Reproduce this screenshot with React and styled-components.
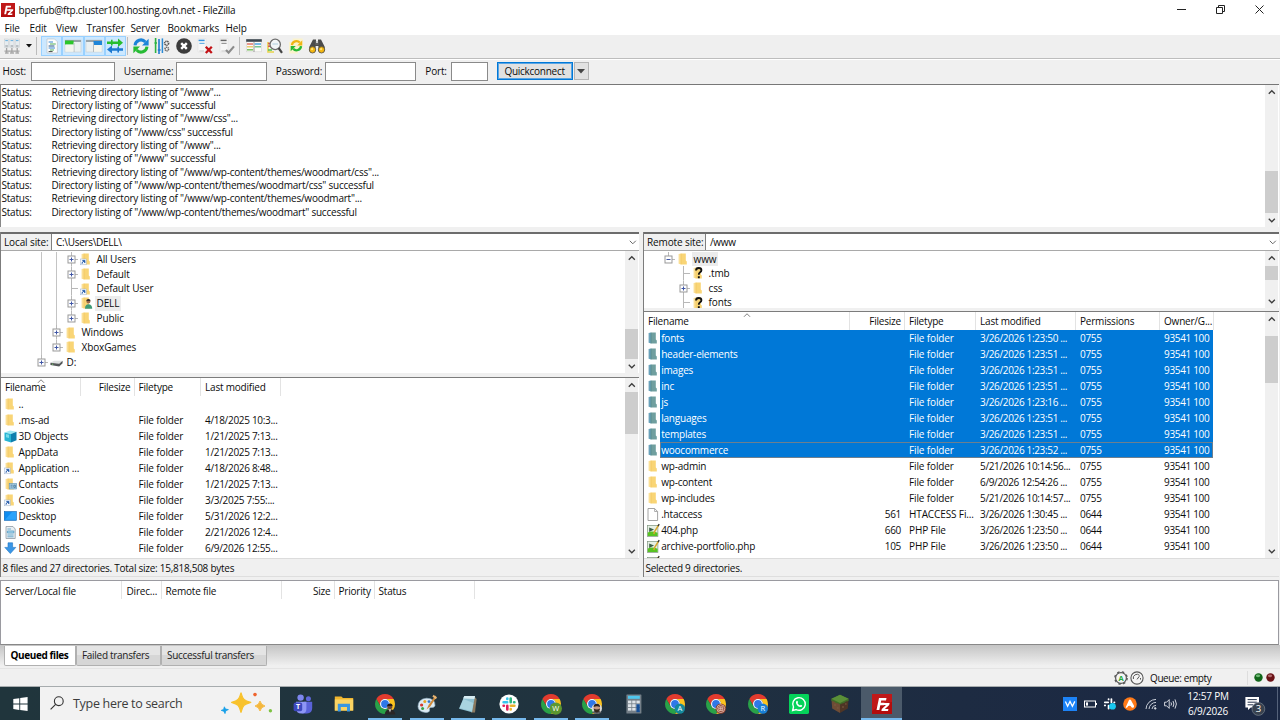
import React from 'react';
import styled, { createGlobalStyle, css } from 'styled-components';

const GlobalStyle = createGlobalStyle`
* {
  box-sizing: border-box;
}
body {
  margin: 0;
  overflow: hidden;
  background: #f0f0f0;
}
`;

const Window = styled.div`
display: flex;
flex-direction: column;
width: 1280px;
height: 720px;
background: #f0f0f0;
color: #0c0c0c;
font-family: "Open Sans", "Noto Sans", sans-serif;
font-size: 10px;
letter-spacing: -0.12px;
white-space: pre;
overflow: hidden;
`;

const Svg = styled.svg`
display: block;
flex: none;
overflow: visible;
`;

/* title and menu */

const TitleBar = styled.header`
display: flex;
align-items: center;
height: 20px;
padding: 0 1px 1px 1px;
background: #fff;
`;

const Title = styled.span`
flex: 1;
padding-left: 3.5px;
letter-spacing: -0.24px;
`;

const WindowButton = styled.span`
display: flex;
justify-content: center;
width: 39px;
`;

const MenuBar = styled.nav`
display: flex;
align-items: center;
height: 15px;
padding-left: 4.5px;
background: #fff;
`;

const MenuItem = styled.span`
width: ${props => props.$w}px;
`;

/* toolbar */

const Toolbar = styled.div`
display: flex;
align-items: center;
height: 24px;
padding: 0 0 1px 1px;
background: #efefef;
border-bottom: 1px solid #bdbdbd;
`;

const ToolButton = styled.span`
display: flex;
align-items: center;
justify-content: center;
width: ${props => props.$w || 21.2}px;
height: 20px;
${props => props.$on && css`
  background: #cce8ff;
  border: 1px solid #99d1ff;
`}
`;

const Divider = styled.span`
width: 1px;
height: 18px;
margin: 0 ${props => props.$right}px 0 ${props => props.$left}px;
background: #bcbcbc;
`;

const ConnectBar = styled.div`
display: flex;
align-items: center;
height: 25px;
padding: 0 0 2px 2.5px;
border-top: 1px solid #fff;
background: #f0f0f0;
`;

const FieldLabel = styled.label`
width: ${props => props.$w}px;
letter-spacing: -0.15px;
`;

const Field = styled.input`
width: ${props => props.$w}px;
height: 19px;
margin-right: 8.8px;
padding: 0 3px;
border: 1px solid #8a8a8a;
background: #fff;
`;

const ConnectButton = styled.button`
width: 76px;
height: 18px;
margin: 0 1px 0 0;
padding: 0;
border: 1px solid #0078d7;
outline: 1px solid #5aa5e4;
outline-offset: -2px;
background: #e1e1e1;
color: inherit;
font: inherit;
letter-spacing: -0.27px;
`;

const DropButton = styled.button`
display: flex;
align-items: center;
justify-content: center;
width: 15px;
height: 18px;
padding: 0;
border: 1px solid #b5b5b5;
background: #e1e1e1;
`;

/* panes */

const LogPane = styled.section`
display: flex;
height: 143px;
margin-right: 1px;
border-top: 1px solid #777;
border-left: 1px solid #888;
background: #fff;
`;

const LogLines = styled.div`
flex: 1;
padding-top: 0.7px;
overflow: hidden;
letter-spacing: -0.225px;
`;

const LogLine = styled.div`
display: flex;
height: 13.33px;
line-height: 13.33px;
padding-left: 0.5px;
`;

const LogKind = styled.span`
width: 50px;
`;

const Split = styled.main`
display: flex;
gap: 4px;
height: 345px;
margin-top: 5px;
padding-right: 1px;
`;

const Side = styled.section`
display: flex;
flex-direction: column;
width: ${props => props.$w}px;
border-left: 1px solid #7c7c7c;
`;

const SiteRow = styled.div`
display: flex;
flex: none;
height: 19px;
border-top: 2px solid #6c6c6c;
border-bottom: 1px solid #a9a9a9;
background: #fff;
line-height: 16px;
`;

const SiteLabel = styled.span`
width: ${props => props.$w}px;
padding-left: 3px;
border-right: 1px solid #808080;
background: #f0f0f0;
`;

const SitePath = styled.span`
display: flex;
flex: 1;
align-items: center;
justify-content: space-between;
padding: 0 2px 0 4px;
letter-spacing: -0.3px;
`;

const TreePane = styled.div`
display: flex;
flex: none;
height: ${props => props.$h}px;
background: #fff;
`;

const TreeRows = styled.div`
flex: 1;
padding: ${props => props.$top}px 0 0 ${props => props.$indent}px;
overflow: hidden;
`;

const TreeRow = styled.div`
display: flex;
height: 14.67px;
align-items: center;
`;

const Guide = styled.span`
width: 15px;
height: 14.67px;
background: linear-gradient(#c4c4c4, #c4c4c4) 7px 0 / 1px ${props => props.$line ? '100%' : '0'} no-repeat;
`;

const TreeIcon = styled.span`
display: flex;
justify-content: center;
width: 15px;
`;

const TreeLabel = styled.span`
height: 14.67px;
margin-left: 1px;
padding: 0 1.5px;
line-height: 14px;
background: ${props => props.$current ? '#ececec' : 'transparent'};
`;

const ListPane = styled.div`
display: flex;
flex: none;
height: ${props => props.$h}px;
margin-top: ${props => props.$gap}px;
border-top: 1px solid #7c7c7c;
background: #fff;
`;

const ListBody = styled.div`
flex: 1;
overflow: hidden;
`;

const ListHeader = styled.div`
display: flex;
height: 18px;
line-height: ${props => props.$lh || 18}px;
`;

const HeaderCell = styled.span`
position: relative;
flex: none;
width: ${props => props.$w}px;
padding: 0 ${props => props.$pr || 3}px 0 ${props => props.$pl || 4}px;
border-right: 1px solid #e3e3e3;
text-align: ${props => props.$right ? 'right' : 'left'};
letter-spacing: -0.2px;
`;

const SortMark = styled.span`
position: absolute;
top: 0.5px;
left: 50%;
transform: translateX(-50%);
`;

const Row = styled.div`
display: flex;
height: 16px;
line-height: 16px;
`;

const IconSlot = styled.span`
display: flex;
align-items: center;
flex: none;
width: 16px;
padding-left: 2.5px;
`;

const RowFields = styled.div`
display: flex;
flex: none;
${props => props.$selected && css`
  background: #0078d7;
  color: #fff;
`}
${props => props.$focused && css`
  box-shadow: inset 0 0 0 1px #6d7f8e;
`}
`;

const Cell = styled.span`
flex: none;
width: ${props => props.$w}px;
padding: 0 4px 0 ${props => props.$pl || 4}px;
letter-spacing: ${props => props.$ls || -0.12}px;
text-align: ${props => props.$right ? 'right' : 'left'};
`;

const PaneStatus = styled.div`
flex: none;
height: 19px;
padding-left: 1.5px;
border-top: 1px solid #dcdcdc;
border-bottom: 1px solid #dedede;
line-height: 18px;
letter-spacing: -0.26px;
`;

/* scrollbar */

const Bar = styled.div`
display: flex;
flex: none;
flex-direction: column;
align-items: center;
width: 13px;
padding: 5px 0 4px;
margin-right: 1px;
background: #f0f0f0;
`;

const Thumb = styled.div`
width: 13px;
height: ${props => props.$h}px;
margin: ${props => props.$gap}px 0 auto;
background: #cdcdcd;
`;

/* queue */

const QueuePane = styled.section`
height: 65px;
margin: 3px 1px 0 0;
border: 1px solid #9a9aa0;
border-bottom-color: #888;
background: #fff;
`;

const Tabs = styled.div`
display: flex;
height: 24px;
padding: 1px 0 0 4px;
background: linear-gradient(#c4c4c4, #f0f0f0 90%);
border-bottom: 1px solid #e4e4e4;
`;

const Tab = styled.span`
width: ${props => props.$w}px;
height: 20px;
padding-left: ${props => props.$active ? 5.5 : 5}px;
line-height: 19px;
border: 1px solid #b0b0b0;
border-top: 0;
border-radius: 0 0 2px 2px;
background: ${props => props.$active ? '#fff' : 'linear-gradient(#e4e4e4 50%, #d6d6d6 50%)'};
font-weight: ${props => props.$active ? 700 : 400};
letter-spacing: ${props => props.$active ? -0.4 : -0.3}px;
color: ${props => props.$active ? '#000' : '#222'};
`;

const StatusBar = styled.footer`
display: flex;
align-items: center;
height: 17px;
padding-left: 1114px;
`;

const QueueText = styled.span`
width: 98px;
margin-left: 6px;
border-right: 1px solid #ddd;
letter-spacing: -0.4px;
`;

const Leds = styled.span`
display: flex;
gap: 3px;
margin-left: 6px;
`;

/* taskbar */

const Taskbar = styled.div`
display: flex;
height: 34px;
border-top: 1px solid #a7acae;
background: linear-gradient(90deg, #20353c, #20333f 45%, #1d2b42 75%, #1b2844);
color: #fff;
`;

const StartButton = styled.div`
display: flex;
align-items: center;
justify-content: center;
width: 40px;
`;

const SearchBox = styled.div`
display: flex;
align-items: center;
width: 240px;
height: 33px;
padding: 0 0 1px 10px;
background: #f2f2f2;
color: #3c3c3c;
font-size: 12.5px;
letter-spacing: -0.3px;
`;

const SearchText = styled.span`
width: 156.5px;
padding-left: 9px;
`;

const Apps = styled.div`
display: flex;
flex: 1;
padding-left: 2px;
`;

const AppButton = styled.span`
display: flex;
align-items: center;
justify-content: center;
width: 41.37px;
background: ${props => props.$active ? '#4b5a6a' : 'transparent'};
${props => props.$open && css`
  background-image: linear-gradient(#76b9ed, #76b9ed);
  background-position: center bottom;
  background-size: ${props.$active ? '100%' : '34px'} 2px;
  background-repeat: no-repeat;
`}
`;

const Tray = styled.div`
display: flex;
align-items: center;
width: 219px;
`;

const TrayIcon = styled.span`
display: flex;
justify-content: center;
width: ${props => props.$w || 20}px;
`;

const Clock = styled.div`
width: 54px;
text-align: center;
line-height: 15px;
letter-spacing: -0.2px;
`;

const Notices = styled.div`
display: flex;
justify-content: center;
width: 40px;
`;

const ShowDesktop = styled.span`
width: 1px;
height: 33px;
margin-left: 2px;
background: #55627a;
`;

/* icons */

const Chevron = ({ up, size = 7.6, color = '#3c3c3c', width = 1.7 }) =>
    <Svg width={size} height={size * 0.6} viewBox="0 0 10 6">
        <path d={up ? 'M1 5L5 1L9 5' : 'M1 1L5 5L9 1'} fill="none" stroke={color} strokeWidth={width} />
    </Svg>;

const ScrollBar = ({ gap, thumb }) =>
    <Bar>
        <Chevron up />
        <Thumb $gap={gap} $h={thumb} />
        <Chevron />
    </Bar>;

const FzLogo = ({ size }) =>
    <Svg width={size} height={size} viewBox="0 0 20 20">
        <rect width="20" height="20" fill="#b30d0d" />
        <path d="M0 0H20V8Q8 9 0 17Z" fill="#c01818" />
        <path d="M4.5 16L7 4H14.5L14 6.6H9.2L8.8 8.8H12.4L11.9 11.2H8.3L7.3 16Z" fill="#fff" />
        <path d="M11.2 9H17.6L17.2 11L12.9 14.9H16.4L16 17H9.4L9.8 14.9L14 11H10.8Z" fill="#fff" />
    </Svg>;

const Folder = ({ mark, selected }) => {
    const front = selected ? '#709f9f' : '#f9d576';
    const back = selected ? '#6aa2bb' : '#fbdf94';
    return (
        <Svg width="13" height="12" viewBox="0 0 13 12">
            <path d="M1.6 1L4.2 0.5V11.5L1.6 10.8Z" fill={back} />
            <path d="M3.8 0.5H8.8V7.6L9.8 8.4V11.5H3.8Z" fill={front} />
            <path d="M4 0.8V11.2" stroke={selected ? '#4c8387' : '#efc45c'} strokeWidth="0.6" />
            {mark === 'link' && <g>
                <rect x="0.4" y="6" width="5.8" height="5.8" fill="#f4f8fd" stroke="#9fb4cf" strokeWidth="0.5" />
                <path d="M2 10.8Q1.8 8.8 3.6 8.3M2.6 7.4H4.9V9.8Z" fill="#1f57a8" stroke="#1f57a8" strokeWidth="0.8" />
            </g>}
            {mark === 'user' && <g>
                <circle cx="8.4" cy="4.4" r="2" fill="#9c6a4b" />
                <path d="M6.3 4Q6.4 1.8 8.6 2Q10.6 2.2 10.5 4Z" fill="#3b302a" />
                <path d="M5 11.8Q5 7.2 8.4 7.2Q12.2 7.2 12.2 11.8Z" fill="#3f9a76" />
            </g>}
            {mark === 'card' && <g>
                <rect x="5.2" y="5.6" width="7.4" height="5.4" fill="#a7cbe0" stroke="#5b93b5" strokeWidth="0.6" />
                <path d="M6.6 7.2H8.6M6.6 9H8.6M9.8 7.2H11.4V9.4H9.8Z" stroke="#386e94" strokeWidth="0.7" fill="none" />
            </g>}
            {mark === 'unknown' && <path d="M4 3.5Q4.1 1 6.7 1Q9.4 1 9.4 3.2Q9.4 4.7 7.8 5.5Q6.8 6 6.8 7.8M6.8 9.3V11.3" fill="none" stroke="#111" strokeWidth="1.9" />}
        </Svg>
    );
};

const Cube = () =>
    <Svg width="13" height="13" viewBox="0 0 13 13">
        <path d="M0.5 2.4L6 0.4L12.5 1.8L7 4Z" fill="#9fe8f3" />
        <path d="M0.5 2.4L7 4V12.6L0.5 10.6Z" fill="#27b5d3" />
        <path d="M7 4L12.5 1.8V10.2L7 12.6Z" fill="#0e7fae" />
        <path d="M2 4L5 4.8V8L2 7.2Z" fill="#75dbe9" />
    </Svg>;

const Desktop = () =>
    <Svg width="13" height="12" viewBox="0 0 13 12">
        <rect x="0.3" y="1.6" width="12" height="8.7" fill="#0f8df0" stroke="#0a63b5" strokeWidth="0.6" />
        <path d="M1 9.8L8 2H12V9.8Z" fill="#2ba3fb" />
    </Svg>;

const Documents = () =>
    <Svg width="13" height="13" viewBox="0 0 13 13">
        <path d="M2 0.5H9L11.2 3V12.5H2Z" fill="#e9eef2" stroke="#8e9aa3" strokeWidth="0.8" />
        <path d="M3.4 3H7M3.4 5H9.8V7H3.4ZM3.4 9H9.6M3.4 10.8H9.6" stroke="#5ca3c8" fill="#b3dbef" strokeWidth="0.9" />
    </Svg>;

const Download = () =>
    <Svg width="13" height="12" viewBox="0 0 13 12">
        <path d="M4 0.8H8.6V5.4H11.8L6.3 11.6L0.8 5.4H4Z" fill="#3a96e6" stroke="#2075c2" strokeWidth="0.6" />
    </Svg>;

const BlankFile = () =>
    <Svg width="12" height="13" viewBox="0 0 12 13">
        <path d="M1 0.5H7.6L10.6 3.5V12.5H1Z" fill="#fff" stroke="#9a9a9a" strokeWidth="0.9" />
        <path d="M7.6 0.5V3.5H10.6" fill="none" stroke="#9a9a9a" strokeWidth="0.8" />
    </Svg>;

const PhpFile = () =>
    <Svg width="13" height="13" viewBox="0 0 13 13">
        <rect x="0.5" y="1.4" width="10.4" height="11" fill="#e6efe4" stroke="#7f957f" strokeWidth="0.7" />
        <path d="M0.8 8.4Q5 6.6 10.6 8.8V12.1H0.8Z" fill="#58c322" />
        <path d="M2.2 3.4L7 5.6L2.2 8Z" fill="#3c5f46" />
        <path d="M11.7 0.8L7.6 7.6L6.8 10" stroke="#d8a72c" strokeWidth="1.5" fill="none" />
        <path d="M12.2 0.2L11 2.2" stroke="#333" strokeWidth="1.3" />
    </Svg>;

const Drive = () =>
    <Svg width="13" height="12" viewBox="0 0 13 12">
        <path d="M0.4 6.8L4 4.8H12.6L9.2 7.8Z" fill="#dfe1e2" />
        <path d="M0.4 6.8L9.2 7.8L12.6 4.8V7.2L9.2 10.4L0.4 9Z" fill="#54585a" />
        <circle cx="2.6" cy="8.2" r="0.6" fill="#75cf63" />
    </Svg>;

const icons = {
    folder: <Folder />,
    selected: <Folder selected />,
    link: <Folder mark="link" />,
    user: <Folder mark="user" />,
    card: <Folder mark="card" />,
    unknown: <Folder mark="unknown" />,
    cube: <Cube />,
    desktop: <Desktop />,
    documents: <Documents />,
    download: <Download />,
    blank: <BlankFile />,
    php: <PhpFile />,
    drive: <Drive />,
};

// box: 'plus', 'minus' or none, end: the line stops at this node
const TreeNode = ({ box, end }) =>
    <Svg width="15" height="14.67" viewBox="0 0 15 14.67">
        <path d={`M7.5 0V${end ? 7.5 : 14.67}M7.5 7.5H14`} stroke="#b8b8b8" strokeWidth="1" />
        {box && <g>
            <rect x="4" y="4" width="7" height="7" fill="#fff" stroke="#999" />
            <path d={box === 'plus' ? 'M5.5 7.5H9.5M7.5 5.5V9.5' : 'M5.5 7.5H9.5'} stroke="#3f55a5" />
        </g>}
    </Svg>;

const Tree = ({ rows }) => rows.map(row =>
    <TreeRow key={row.name}>
        {row.guides.map((line, i) => <Guide key={i} $line={line} />)}
        <TreeNode box={row.box} end={row.end} />
        <TreeIcon>{icons[row.icon]}</TreeIcon>
        <TreeLabel $current={row.current}>{row.name}</TreeLabel>
    </TreeRow>);

/* toolbar icons */

const Tool = ({ children, size = 16 }) =>
    <Svg width={size} height={size} viewBox="0 0 16 16" fill="none">{children}</Svg>;

const SiteManagerIcon = () =>
    <Tool>
        {[0.5, 5.8, 11.1].map(x => <g key={x}>
            <rect x={x} y="1" width="4.2" height="8.6" fill="#e7ecef" stroke="#c3cace" strokeWidth="0.5" />
            <path d={`M${x + 0.8} 2.6H${x + 3.4}`} stroke="#58a8dc" strokeWidth="0.9" />
            <path d={`M${x + 0.8} 8H${x + 3.4}`} stroke="#8d959a" />
        </g>)}
        <path d="M2.6 10V14.4M7.9 10V14.4M13.2 10V14.4M0.5 13.2H15.5" stroke="#a2a2a2" strokeWidth="1.3" />
        <path d="M1 15H4.6M6 15H10M11.4 15H15" stroke="#888" />
    </Tool>;

const LogIcon = () =>
    <Tool>
        <path d="M3 1H10.6L13.4 3.8V15H3Z" fill="#fdfdfd" stroke="#b9c3ca" strokeWidth="0.7" />
        <path d="M4.6 4H9M4.6 10H11" stroke="#3b8ad2" strokeWidth="1.2" />
        <path d="M6 6H11.8M6 12H10" stroke="#55b05b" strokeWidth="1.2" />
        <path d="M4.6 8H10.4" stroke="#476f9c" strokeWidth="1.2" />
        <path d="M4.6 13.6H8.6" stroke="#444" />
    </Tool>;

const LocalIcon = () =>
    <Tool>
        <rect x="0" y="2" width="16" height="12" fill="#eaf0f1" stroke="#c5cdd0" strokeWidth="0.6" />
        <rect x="0" y="2" width="16" height="2" fill="#98a4aa" />
        <rect x="0" y="2.6" width="8.6" height="4" fill="#2bc62b" />
        <path d="M9 5V14" stroke="#b3bcc0" />
        <rect x="0.5" y="6.6" width="8" height="7" fill="#f4f5ee" />
    </Tool>;

const RemoteIcon = () =>
    <Tool>
        <rect x="0" y="2" width="16" height="12" fill="#eaf0f1" stroke="#c5cdd0" strokeWidth="0.6" />
        <rect x="0" y="2" width="16" height="2" fill="#98a4aa" />
        <rect x="7.5" y="3" width="8.5" height="4" fill="#1f86d8" />
        <path d="M7.5 5V14" stroke="#b3bcc0" />
        <rect x="8" y="7" width="7.5" height="6.6" fill="#f6f5ec" />
    </Tool>;

const TransfersIcon = () =>
    <Tool>
        <path d="M0 3.4H4V1.8H5.6V3.4H11V0.6L16 4.8L11 9V6H5.6V7.6H4V6H0Z" fill="#27bd2f" />
        <path d="M16 10.2H12V8.8H10.4V10.2H5V7.4L0 11.6L5 15.6V12.8H10.4V14.4H12V12.8H16Z" fill="#1d79d1" />
    </Tool>;

const RefreshArrows = ({ top, bottom }) =>
    <g>
        <path d="M2 7.4A6 6 0 0 1 12.4 3.9" stroke={top} strokeWidth="3" />
        <path d="M15.6 0.8V7.6H9Z" fill={top} />
        <path d="M14 8.6A6 6 0 0 1 3.6 12.1" stroke={bottom} strokeWidth="3" />
        <path d="M0.4 15.2V8.4H7Z" fill={bottom} />
    </g>;

const ProcessIcon = () =>
    <Tool>
        <path d="M1.6 0V15M0.4 5H3" stroke="#2cb343" strokeWidth="1.6" />
        <path d="M5 1V16M3.8 12H6.6" stroke="#1d79d1" strokeWidth="1.6" />
        <path d="M8.4 0.4V15" stroke="#2b8bd6" strokeWidth="1.5" />
        <circle cx="12.6" cy="5.2" r="2" stroke="#555" strokeWidth="1.6" strokeDasharray="1.3 0.5" />
        <circle cx="12.8" cy="11" r="1.8" stroke="#666" strokeWidth="1.5" strokeDasharray="1.2 0.5" />
    </Tool>;

const CancelIcon = () =>
    <Tool>
        <circle cx="8" cy="8" r="7.8" fill="#3c3c3c" />
        <path d="M5.2 5.2L10.8 10.8M10.8 5.2L5.2 10.8" stroke="#fff" strokeWidth="2.4" />
    </Tool>;

const ServerSheet = ({ dark }) =>
    <g>
        <path d="M1 0.5H9V14H1Z" fill="#f7f7f7" stroke="#dedede" strokeWidth="0.5" />
        <path d="M1.6 2.4H7.6" stroke={dark ? '#666' : '#3494df'} strokeWidth="1.5" />
        <path d="M2.4 5.4H7.6" stroke={dark ? '#999' : '#6bb2e6'} strokeWidth="1.2" />
        <path d="M2.4 13H7" stroke="#c9c9c9" />
    </g>;

const DisconnectIcon = () =>
    <Tool>
        <ServerSheet />
        <path d="M8.8 8.8L14.8 15M14.8 8.8L8.8 15" stroke="#c31216" strokeWidth="2.3" />
    </Tool>;

const ReconnectIcon = () =>
    <Tool>
        <ServerSheet dark />
        <path d="M7 12L9.6 14.6L15 8.4" stroke="#8b8b8b" strokeWidth="2.2" />
    </Tool>;

const FilterIcon = () =>
    <Tool>
        <rect x="0.5" y="1.8" width="15" height="12" fill="#fbfbf6" stroke="#d4d4d4" strokeWidth="0.6" />
        <rect x="0.2" y="1.2" width="15.6" height="2.6" fill="#3d4850" />
        <path d="M1 6H7" stroke="#e06a62" strokeWidth="1.4" />
        <path d="M1 8.8H7" stroke="#eac14c" strokeWidth="1.2" />
        <path d="M1 11.8H7" stroke="#70bc59" strokeWidth="1.4" />
        <path d="M8.6 6H15" stroke="#3b9ee3" strokeWidth="1.4" />
        <path d="M8.6 8.8H15" stroke="#57ba74" strokeWidth="1.2" />
        <path d="M8 4V14" stroke="#999" />
    </Tool>;

const CompareIcon = () =>
    <Tool>
        <path d="M1 4V14H7" stroke="#e9d44c" strokeWidth="1.6" />
        <path d="M1 5.4H3M1 8.2H3" stroke="#e25b50" strokeWidth="1.5" />
        <path d="M1 12H5" stroke="#5ac458" strokeWidth="1.6" />
        <circle cx="8.2" cy="6.4" r="5.2" fill="#f2f6f8" stroke="#6d6d6d" strokeWidth="1.3" />
        <path d="M5.4 6H11" stroke="#b9d5e3" strokeWidth="1.2" />
        <path d="M11.6 10L15 14.8" stroke="#444" strokeWidth="2.2" />
    </Tool>;

const SyncIcon = () =>
    <Tool>
        <path d="M4.6 0.5H14.6V11.5H4.6ZM1 4H10V15.4H1Z" fill="#fbf3cd" />
        <g transform="translate(2.4 1.6) scale(.76)"><RefreshArrows top="#efb515" bottom="#28b934" /></g>
    </Tool>;

const FindIcon = () =>
    <Tool>
        <path d="M4 1.4H7V5H9V1.4H12L15.8 9V13H9.4V8H6.6V13H0.2V9Z" fill="#4b4b4b" />
        <path d="M7.1 3V7M8.9 3V7" stroke="#888" strokeWidth="0.6" />
        <circle cx="3.5" cy="11.8" r="3.2" fill="#f3b60f" stroke="#4a4a4a" strokeWidth="0.8" />
        <circle cx="12.5" cy="11.8" r="3.2" fill="#f3b60f" stroke="#4a4a4a" strokeWidth="0.8" />
        <circle cx="3.1" cy="11.2" r="1.1" fill="#ffe27c" />
        <circle cx="12.1" cy="11.2" r="1.1" fill="#ffe27c" />
    </Tool>;

/* taskbar icons */

const CHROME_ARC = 'M10 5H18.66A10 10 0 0 0 1.34 5L5.67 12.5A5 5 0 0 1 10 5Z';

const Chrome = ({ badge, letter, face }) =>
    <Svg width="20" height="20" viewBox="0 0 20 20">
        <path d={CHROME_ARC} fill="#e33b2e" />
        <path d={CHROME_ARC} fill="#fcc31e" transform="rotate(120 10 10)" />
        <path d={CHROME_ARC} fill="#29a148" transform="rotate(240 10 10)" />
        <circle cx="10" cy="10" r="5" fill="#fff" />
        <circle cx="10" cy="10" r="3.9" fill="#2f78e8" />
        {badge && <circle cx="14.8" cy="14.6" r={letter === 'W' ? 6.2 : 5.2} fill={badge} />}
        {letter && <text x="14.8" y="17.3" textAnchor="middle" fontSize="7.5" fill="#fff" letterSpacing="0">{letter}</text>}
        {face === 'dark' && <g>
            <path d="M9.6 20.4Q10.4 15.2 15 15.2Q19.4 15.2 20.4 20.4Z" fill="#2a2627" />
            <path d="M13.6 15.2H16.2L15 18.6Z" fill="#c9c5c3" />
            <circle cx="14.8" cy="12.4" r="2.6" fill="#6a4536" />
            <path d="M12.1 12Q12.4 9.2 15 9.4Q17.6 9.6 17.5 12Z" fill="#1f1a1b" />
        </g>}
        {face === 'beard' && <g>
            <path d="M10 18.4Q15 14 19.6 18.4Q15 21.4 10 18.4Z" fill="#5b5e63" />
            <circle cx="14.8" cy="14" r="3.2" fill="#c79a80" />
            <path d="M11.6 13Q11.6 9.6 15 9.8Q18.2 10 18 13Q15 11.6 11.6 13Z" fill="#292322" />
            <path d="M11.7 14.5Q15 16.4 18 14.5Q17.4 18.6 14.8 18.6Q12.2 18.6 11.7 14.5Z" fill="#33271f" />
        </g>}
        {face === 'ring' && <g fill="none" stroke="#eac9bd" strokeWidth="0.8">
            <circle cx="14.8" cy="14.6" r="3.9" />
            <path d="M12.8 12.8H16.8V16.6H12.8ZM14.8 12.8V16.6M12.8 14.7H16.8" />
        </g>}
    </Svg>;

const TeamsIcon = () =>
    <Svg width="20" height="20" viewBox="0 0 20 20">
        <circle cx="7.6" cy="3.6" r="3.2" fill="#7d86ee" />
        <circle cx="15.4" cy="4.8" r="2.5" fill="#5f68dc" />
        <path d="M11 7.8H19.2V14Q19.2 19.4 14 19.4H9Z" fill="#5a62d8" />
        <path d="M3 7.8H13.4V15Q13.4 19.6 8.6 19.6Q3 19.6 3 14Z" fill="#8e96f5" />
        <rect x="0.6" y="8.6" width="8.6" height="8.6" rx="1.8" fill="#3d48bd" />
        <text x="4.9" y="15.4" textAnchor="middle" fontSize="7" fontWeight="700" fill="#fff">T</text>
    </Svg>;

const ExplorerIcon = () =>
    <Svg width="20" height="18" viewBox="0 0 20 18">
        <path d="M0.8 1.4H7.4L9 3H19.2V15.6H0.8Z" fill="#f1b62e" />
        <path d="M0.8 4.4H19.2V15.6H0.8Z" fill="#fcd462" />
        <path d="M3.8 16.6V8.8H16V16.6H13V12H6.8V16.6Z" fill="#3b97e0" />
    </Svg>;

const PaintIcon = () =>
    <Svg width="20" height="20" viewBox="0 0 20 20">
        <path d="M1 12.6Q1 5 9.6 4.2Q18.4 4.6 18 11.4Q17.6 14 14 13.4Q11.6 13.4 12.6 16Q12.6 18.8 8.4 18.4Q1.2 17.8 1 12.6Z" fill="#dcebf4" stroke="#9ab8cb" strokeWidth="0.6" />
        <circle cx="4.6" cy="11" r="1.6" fill="#d43a2f" />
        <circle cx="7.8" cy="7.6" r="1.5" fill="#e9a524" />
        <circle cx="5.6" cy="14.6" r="1.5" fill="#37a34a" />
        <circle cx="12" cy="7.6" r="1.4" fill="#2f77cd" />
        <path d="M18.4 1.6L11.6 11L9.6 15.4L13.4 12.2L19.6 3Z" fill="#cf8a3b" />
        <path d="M16.6 0.8L20 3.6L18.8 5.2L15.4 2.6Z" fill="#e6b575" />
    </Svg>;

const NotepadIcon = () =>
    <Svg width="20" height="20" viewBox="0 0 20 20">
        <path d="M16.4 2.6L18.6 5L17 18.6H13Z" fill="#8a7960" />
        <path d="M6.4 2H17L14 18.2L1 14.8Z" fill="#8fc1d2" />
        <path d="M6.4 2H17L16.4 5L5 4.6Z" fill="#d7ecf2" />
        <path d="M5.4 5L15.4 9L13.8 17.2L1.6 14Z" fill="#b4dbe6" opacity=".7" />
    </Svg>;

const SlackMark = () =>
    <g fill="none" strokeWidth="2.6" strokeLinecap="round">
        <path d="M8.3 4.6V4.9M4.6 8.3H8.2" stroke="#36c5f0" />
        <path d="M11.7 4.6V8.2M15.1 8.3H15.4" stroke="#2eb67d" />
        <path d="M11.8 11.7H15.4M11.7 15.1V15.4" stroke="#ecb22e" />
        <path d="M8.3 11.8V15.4M4.6 11.7H4.9" stroke="#e01e5a" />
    </g>;

const SlackIcon = () =>
    <Svg width="20" height="20" viewBox="0 0 20 20">
        <circle cx="10" cy="10" r="9.6" fill="#fff" />
        <SlackMark />
    </Svg>;

const CalcIcon = () =>
    <Svg width="18" height="20" viewBox="0 0 18 20">
        <rect x="1.4" y="0.4" width="15" height="19.2" rx="0.6" fill="#747f88" />
        <rect x="3" y="1.8" width="11.8" height="3" fill="#4fc7ee" />
        {[6.6, 10.2, 13.8].map(y => [3, 7.2, 11.4].map(x =>
            <rect key={x + '-' + y} x={x} y={y} width="3.4" height="2.8" fill="#dde3e8" />))}
        <rect x="11.4" y="10.2" width="3.4" height="8" fill="#164f96" />
    </Svg>;

const WhatsAppIcon = () =>
    <Svg width="20" height="20" viewBox="0 0 20 20">
        <rect width="20" height="20" rx="1.4" fill="#05d35a" />
        <path d="M3.6 16.6L4.5 13A6.3 6.3 0 1 1 7.2 15.6Z" fill="none" stroke="#fff" strokeWidth="1.4" />
        <path d="M7.5 6.9Q8.3 6.4 8.7 7.2L9.1 8.2L8.5 9.1Q9.3 10.8 11 11.5L11.8 10.8L13.2 11.5Q13.2 13 11.6 13.1Q7.8 12.6 7 9Q6.8 7.6 7.5 6.9Z" fill="#fff" />
    </Svg>;

const GrassBlock = () =>
    <Svg width="20" height="20" viewBox="0 0 20 20">
        <path d="M1.4 4.8L10 9V19L2.2 14.6Z" fill="#6e4c35" />
        <path d="M18.6 4.8L10 9V19L17.8 14.6Z" fill="#4e3525" />
        <path d="M10 0.8L18.6 4.8V7L16 7.6L14 9L12 9.4L10 10.6L8 9.2L6 9L4 7.4L1.4 7V4.8Z" fill="#3f6c28" />
        <path d="M10 0.8L18.6 4.8L10 9L1.4 4.8Z" fill="#5a8f38" />
        <path d="M4 11H6M7 14H8.6M12 13H14M15 10H16.6" stroke="#7d5d43" strokeWidth="1.2" />
    </Svg>;

const Sparkles = () =>
    <Svg width="52" height="22" viewBox="0 0 52 22">
        <path d="M20 0.8C21.8 7.4 23 8.6 29.8 10.4C23 12.2 21.8 13.4 20 20.4C18.2 13.4 17 12.2 10.6 10.4C17 8.6 18.2 7.4 20 0.8Z" fill="#f8c22d" stroke="#f8c22d" strokeWidth="1.2" strokeLinejoin="round" />
        <path d="M39 9Q40 13 44 14Q40 15 39 19Q38 15 34 14Q38 13 39 9Z" fill="#f4b73d" stroke="#f4b73d" strokeWidth="0.9" />
        <path d="M3.4 14.8L4.4 17L7.4 17.6L4.8 18.8L4 21.6L2.8 19.2L0.2 18.4L2.6 17.4Z" fill="#169fe8" stroke="#169fe8" strokeWidth="0.8" />
        <circle cx="34" cy="2.6" r="1.8" fill="#ef642e" />
        <circle cx="49.4" cy="18.8" r="1.7" fill="#7dc242" />
    </Svg>;

const StartLogo = () =>
    <Svg width="15" height="14" viewBox="0 0 15 14">
        <path d="M0.3 2L6.3 1.2V6.6H0.3ZM7.2 1L14.6 0V6.6H7.2ZM0.3 7.5H6.3V12.9L0.3 12ZM7.2 7.5H14.6V14L7.2 13Z" fill="#fff" />
    </Svg>;

const Led = ({ color, shine }) =>
    <Svg width="9" height="9" viewBox="0 0 9 9">
        <circle cx="4.5" cy="4.5" r="4.2" fill={color} />
        <ellipse cx="4" cy="2.8" rx="2.2" ry="1.4" fill={shine} />
    </Svg>;

/* data */

const log = [
    'Retrieving directory listing of "/www"...',
    'Directory listing of "/www" successful',
    'Retrieving directory listing of "/www/css"...',
    'Directory listing of "/www/css" successful',
    'Retrieving directory listing of "/www"...',
    'Directory listing of "/www" successful',
    'Retrieving directory listing of "/www/wp-content/themes/woodmart/css"...',
    'Directory listing of "/www/wp-content/themes/woodmart/css" successful',
    'Retrieving directory listing of "/www/wp-content/themes/woodmart"...',
    'Directory listing of "/www/wp-content/themes/woodmart" successful',
];

const localTree = [
    { name: 'All Users', icon: 'link', guides: [1, 1], box: 'plus' },
    { name: 'Default', icon: 'folder', guides: [1, 1], box: 'plus' },
    { name: 'Default User', icon: 'link', guides: [1, 1] },
    { name: 'DELL', icon: 'user', guides: [1, 1], box: 'plus', current: true },
    { name: 'Public', icon: 'folder', guides: [1, 1], box: 'plus', end: true },
    { name: 'Windows', icon: 'folder', guides: [1], box: 'plus' },
    { name: 'XboxGames', icon: 'folder', guides: [1], box: 'plus', end: true },
    { name: 'D:', icon: 'drive', guides: [], box: 'plus', end: true },
];

const remoteTree = [
    { name: 'www', icon: 'folder', guides: [], box: 'minus', end: true, current: true },
    { name: '.tmb', icon: 'unknown', guides: [0] },
    { name: 'css', icon: 'folder', guides: [0], box: 'plus' },
    { name: 'fonts', icon: 'unknown', guides: [0] },
];

const localFiles = [
    ['folder', '..', '', ''],
    ['folder', '.ms-ad', 'File folder', '4/18/2025 10:3...'],
    ['cube', '3D Objects', 'File folder', '1/21/2025 7:13...'],
    ['folder', 'AppData', 'File folder', '1/21/2025 7:13...'],
    ['link', 'Application ...', 'File folder', '4/18/2026 8:48...'],
    ['card', 'Contacts', 'File folder', '1/21/2025 7:13...'],
    ['link', 'Cookies', 'File folder', '3/3/2025 7:55:...'],
    ['desktop', 'Desktop', 'File folder', '5/31/2026 12:2...'],
    ['documents', 'Documents', 'File folder', '2/21/2026 12:4...'],
    ['download', 'Downloads', 'File folder', '6/9/2026 12:55...'],
];

const remoteFiles = [
    ['selected', 'fonts', '', 'File folder', '3/26/2026 1:23:50 ...', '0755'],
    ['selected', 'header-elements', '', 'File folder', '3/26/2026 1:23:51 ...', '0755'],
    ['selected', 'images', '', 'File folder', '3/26/2026 1:23:51 ...', '0755'],
    ['selected', 'inc', '', 'File folder', '3/26/2026 1:23:51 ...', '0755'],
    ['selected', 'js', '', 'File folder', '3/26/2026 1:23:16 ...', '0755'],
    ['selected', 'languages', '', 'File folder', '3/26/2026 1:23:51 ...', '0755'],
    ['selected', 'templates', '', 'File folder', '3/26/2026 1:23:51 ...', '0755'],
    ['selected', 'woocommerce', '', 'File folder', '3/26/2026 1:23:52 ...', '0755'],
    ['folder', 'wp-admin', '', 'File folder', '5/21/2026 10:14:56...', '0755'],
    ['folder', 'wp-content', '', 'File folder', '6/9/2026 12:54:26 ...', '0755'],
    ['folder', 'wp-includes', '', 'File folder', '5/21/2026 10:14:57...', '0755'],
    ['blank', '.htaccess', '561', 'HTACCESS Fi...', '3/26/2026 1:30:45 ...', '0644'],
    ['php', '404.php', '660', 'PHP File', '3/26/2026 1:23:50 ...', '0644'],
    ['php', 'archive-portfolio.php', '105', 'PHP File', '3/26/2026 1:23:50 ...', '0644'],
];

const LocalSide = () =>
    <Side $w={639}>
        <SiteRow>
            <SiteLabel $w={51}>Local site:</SiteLabel>
            <SitePath>C:\Users\DELL\<Chevron color="#666" width={1.3} /></SitePath>
        </SiteRow>
        <TreePane $h={122}>
            <TreeRows $top={1} $indent={33}><Tree rows={localTree} /></TreeRows>
            <ScrollBar gap={68.4} thumb={30} />
        </TreePane>
        <ListPane $h={181} $gap={4}>
            <ListBody>
                <ListHeader>
                    <HeaderCell $w={80}>Filename<SortMark><Chevron up color="#666" width={1.1} /></SortMark></HeaderCell>
                    <HeaderCell $w={53.5} $right>Filesize</HeaderCell>
                    <HeaderCell $w={66.5}>Filetype</HeaderCell>
                    <HeaderCell $w={80}>Last modified</HeaderCell>
                </ListHeader>
                {localFiles.map(([icon, name, type, date]) =>
                    <Row key={name}>
                        <IconSlot>{icons[icon]}</IconSlot>
                        <Cell $w={64} $pl={1.5}>{name}</Cell>
                        <Cell $w={53.5} />
                        <Cell $w={66.5}>{type}</Cell>
                        <Cell $w={80} $ls={-0.3}>{date}</Cell>
                    </Row>)}
            </ListBody>
            <ScrollBar gap={4.4} thumb={42} />
        </ListPane>
        <PaneStatus>8 files and 27 directories. Total size: 15,818,508 bytes</PaneStatus>
    </Side>;

const RemoteSide = () =>
    <Side $w={636}>
        <SiteRow>
            <SiteLabel $w={62}>Remote site:</SiteLabel>
            <SitePath>/www<Chevron color="#666" width={1.3} /></SitePath>
        </SiteRow>
        <TreePane $h={57}>
            <TreeRows $top={0.5} $indent={17}><Tree rows={remoteTree} /></TreeRows>
            <ScrollBar gap={5.4} thumb={14} />
        </TreePane>
        <ListPane $h={247} $gap={3}>
            <ListBody>
                <ListHeader>
                    <HeaderCell $w={206}>Filename<SortMark><Chevron up color="#666" width={1.1} /></SortMark></HeaderCell>
                    <HeaderCell $w={55} $right>Filesize</HeaderCell>
                    <HeaderCell $w={71}>Filetype</HeaderCell>
                    <HeaderCell $w={100}>Last modified</HeaderCell>
                    <HeaderCell $w={84}>Permissions</HeaderCell>
                    <HeaderCell $w={54}>Owner/G...</HeaderCell>
                </ListHeader>
                {remoteFiles.map(([icon, name, size, type, date, perms]) =>
                    <Row key={name}>
                        <IconSlot>{icons[icon]}</IconSlot>
                        <RowFields $selected={icon === 'selected'} $focused={name === 'woocommerce'}>
                            <Cell $w={190} $pl={1.2} $ls={-0.2}>{name}</Cell>
                            <Cell $w={55} $right $ls={-0.3}>{size}</Cell>
                            <Cell $w={71}>{type}</Cell>
                            <Cell $w={100} $ls={-0.34}>{date}</Cell>
                            <Cell $w={84} $ls={-0.3}>{perms}</Cell>
                            <Cell $w={53} $ls={-0.34}>93541 100</Cell>
                        </RowFields>
                    </Row>)}
                <Row><IconSlot>{icons.php}</IconSlot></Row>
            </ListBody>
            <ScrollBar gap={14.4} thumb={47} />
        </ListPane>
        <PaneStatus>Selected 9 directories.</PaneStatus>
    </Side>;

const App = () =>
    <Window>
        <GlobalStyle />
        <TitleBar>
            <FzLogo size={14} />
            <Title>bperfub@ftp.cluster100.hosting.ovh.net - FileZilla</Title>
            <WindowButton><Svg width="9" height="9"><path d="M0 4.5H9" stroke="#222" /></Svg></WindowButton>
            <WindowButton>
                <Svg width="9" height="9" fill="none" stroke="#222"><path d="M0.5 2.5H6.5V8.5H0.5ZM2.5 2.5V0.5H8.5V6.5H6.5" /></Svg>
            </WindowButton>
            <WindowButton><Svg width="9" height="9"><path d="M0.5 0.5L8.5 8.5M8.5 0.5L0.5 8.5" stroke="#222" /></Svg></WindowButton>
        </TitleBar>
        <MenuBar>
            <MenuItem $w={25}>File</MenuItem>
            <MenuItem $w={26.5}>Edit</MenuItem>
            <MenuItem $w={30.5}>View</MenuItem>
            <MenuItem $w={44}>Transfer</MenuItem>
            <MenuItem $w={37}>Server</MenuItem>
            <MenuItem $w={58}>Bookmarks</MenuItem>
            <MenuItem $w={30}>Help</MenuItem>
        </MenuBar>
        <Toolbar>
            <ToolButton><SiteManagerIcon /></ToolButton>
            <ToolButton $w={13}><Svg width="6" height="4"><path d="M0 0H6L3 3.5Z" fill="#111" /></Svg></ToolButton>
            <Divider $left={1} $right={4} />
            <ToolButton $on><LogIcon /></ToolButton>
            <ToolButton $on><LocalIcon /></ToolButton>
            <ToolButton $on><RemoteIcon /></ToolButton>
            <ToolButton $on><TransfersIcon /></ToolButton>
            <Divider $left={1} $right={2.2} />
            <ToolButton $w={21.5}><Tool><RefreshArrows top="#1d84d8" bottom="#26bb34" /></Tool></ToolButton>
            <ToolButton $w={21.5}><ProcessIcon /></ToolButton>
            <ToolButton $w={21.5}><CancelIcon /></ToolButton>
            <ToolButton $w={21.5}><DisconnectIcon /></ToolButton>
            <ToolButton $w={21.5}><ReconnectIcon /></ToolButton>
            <Divider $left={1.5} $right={2.9} />
            <ToolButton><FilterIcon /></ToolButton>
            <ToolButton><CompareIcon /></ToolButton>
            <ToolButton><SyncIcon /></ToolButton>
            <ToolButton><FindIcon /></ToolButton>
        </Toolbar>
        <ConnectBar>
            <FieldLabel $w={28.5}>Host:</FieldLabel><Field $w={84} />
            <FieldLabel $w={52.2}>Username:</FieldLabel><Field $w={91} />
            <FieldLabel $w={49.2}>Password:</FieldLabel><Field $w={91.5} />
            <FieldLabel $w={26}>Port:</FieldLabel><Field $w={36.5} />
            <ConnectButton>Quickconnect</ConnectButton>
            <DropButton><Svg width="8" height="5"><path d="M0 0H8L4 4.5Z" fill="#444" /></Svg></DropButton>
        </ConnectBar>
        <LogPane>
            <LogLines>
                {log.map((line, i) => <LogLine key={i}><LogKind>Status:</LogKind>{line}</LogLine>)}
            </LogLines>
            <ScrollBar gap={76.4} thumb={42} />
        </LogPane>
        <Split>
            <LocalSide />
            <RemoteSide />
        </Split>
        <QueuePane>
            <ListHeader $lh={20}>
                <HeaderCell $w={120.5}>Server/Local file</HeaderCell>
                <HeaderCell $w={40} $pl={5}>Direc...</HeaderCell>
                <HeaderCell $w={120}>Remote file</HeaderCell>
                <HeaderCell $w={53} $right>Size</HeaderCell>
                <HeaderCell $w={40}>Priority</HeaderCell>
                <HeaderCell $w={100}>Status</HeaderCell>
            </ListHeader>
        </QueuePane>
        <Tabs>
            <Tab $w={72} $active>Queued files</Tab>
            <Tab $w={85}>Failed transfers</Tab>
            <Tab $w={106}>Successful transfers</Tab>
        </Tabs>
        <StatusBar>
            <Svg width="14" height="14" viewBox="0 0 14 14">
                <circle cx="7" cy="7" r="5.4" fill="#f5f5f5" stroke="#565656" strokeWidth="1.2" />
                <circle cx="7" cy="7" r="6.2" fill="none" stroke="#565656" strokeWidth="1.3" strokeDasharray="2.4 2.5" />
                <text x="7" y="9.6" textAnchor="middle" fontSize="7.5" fontWeight="700" fill="#22a83a">A</text>
            </Svg>
            <Svg width="16" height="14" viewBox="-2 0 16 14">
                <circle cx="7" cy="7" r="6.1" fill="#f4f4f4" stroke="#565656" strokeWidth="1.1" />
                <path d="M3.4 8A3.7 3.7 0 0 1 9.6 4.4M7 8.4L9.4 5.2M10.5 7V8.6" fill="none" stroke="#565656" />
            </Svg>
            <QueueText>Queue: empty</QueueText>
            <Leds>
                <Led color="#11661a" shine="#6fb874" />
                <Led color="#6a1116" shine="#b06a6e" />
            </Leds>
        </StatusBar>
        <Taskbar>
            <StartButton><StartLogo /></StartButton>
            <SearchBox>
                <Svg width="14" height="14" viewBox="0 0 14 14" fill="none" stroke="#333" strokeWidth="1.1">
                    <circle cx="8.8" cy="5.2" r="4.4" />
                    <path d="M5.6 8.4L0.6 13.4" />
                </Svg>
                <SearchText>Type here to search</SearchText>
                <Sparkles />
            </SearchBox>
            <Apps>
                <AppButton><TeamsIcon /></AppButton>
                <AppButton><ExplorerIcon /></AppButton>
                <AppButton $open><Chrome face="dark" /></AppButton>
                <AppButton $open><PaintIcon /></AppButton>
                <AppButton $open><NotepadIcon /></AppButton>
                <AppButton $open><SlackIcon /></AppButton>
                <AppButton $open><Chrome badge="#5c9732" letter="W" /></AppButton>
                <AppButton $open><Chrome badge="#d9d9d6" face="beard" /></AppButton>
                <AppButton><CalcIcon /></AppButton>
                <AppButton><Chrome badge="#15899c" letter="A" /></AppButton>
                <AppButton><Chrome badge="#8b3d2c" face="ring" /></AppButton>
                <AppButton><Chrome badge="#1a7fd4" letter="R" /></AppButton>
                <AppButton><WhatsAppIcon /></AppButton>
                <AppButton><GrassBlock /></AppButton>
                <AppButton $open $active><FzLogo size={20} /></AppButton>
            </Apps>
            <Tray>
                <TrayIcon $w={18}>
                    <Svg width="14" height="14" viewBox="0 0 14 14">
                        <rect width="14" height="14" fill="#1d83f7" />
                        <path d="M2.4 4.4L4.6 9.2L7 4.4L9.4 9.2L11.8 4.4" fill="none" stroke="#fff" strokeWidth="1.3" />
                    </Svg>
                </TrayIcon>
                <TrayIcon $w={22}>
                    <Svg width="13" height="8" viewBox="0 0 13 8">
                        <rect x="0.5" y="1" width="11" height="6" fill="none" stroke="#fff" />
                        <path d="M12.5 3V5" stroke="#fff" />
                        <rect x="2" y="2.4" width="2" height="3.2" fill="#fff" />
                    </Svg>
                </TrayIcon>
                <TrayIcon $w={18}>
                    <Svg width="14" height="14" viewBox="0 0 20 20">
                        <g fill="none" stroke="#fff" strokeWidth="2.6" strokeLinecap="round">
                            <path d="M8 3V3.4M2.6 7.6H7.4M12 3V7.4M16 7.6H16.4M2.6 12H3M8 16.4V12.2" />
                        </g>
                        <circle cx="13.6" cy="13.2" r="4.8" fill="#19c8f0" />
                    </Svg>
                </TrayIcon>
                <TrayIcon $w={22}>
                    <Svg width="14" height="14" viewBox="0 0 14 14">
                        <circle cx="7" cy="7" r="6.8" fill="#ff7a18" />
                        <path d="M2.6 10.4L6 3Q7 1.8 8 3.2L11 8.8Q11.6 11 9.4 10.8Q8.4 10.6 7.6 9Q5.4 8.4 4.4 10.2Q3.4 11.4 2.6 10.4Z" fill="#fff" />
                    </Svg>
                </TrayIcon>
                <TrayIcon>
                    <Svg width="12" height="12" viewBox="0 0 12 12" fill="none" stroke="#c8ced8" strokeWidth="1">
                        <path d="M1 11A10 10 0 0 1 11 1.4M4 11A7 7 0 0 1 11 4.4M7 11A4 4 0 0 1 11 7.4" />
                        <circle cx="10.2" cy="10.4" r="0.8" fill="#fff" />
                    </Svg>
                </TrayIcon>
                <TrayIcon>
                    <Svg width="14" height="12" viewBox="0 0 14 12" fill="none" stroke="#e6e9ee" strokeWidth="0.9">
                        <path d="M0.6 4.2H2.6L5.2 1.6V10.4L2.6 7.8H0.6ZM7 4.4Q8 6 7 7.6M9 3Q10.8 6 9 9M11 1.4Q13.8 6 11 10.6" />
                    </Svg>
                </TrayIcon>
                <Clock>12:57 PM<br />6/9/2026</Clock>
                <Notices>
                    <Svg width="20" height="20" viewBox="0 0 20 20">
                        <path d="M0.4 3H14V13.6H5.8L3 16V13.6H0.4Z" fill="#fff" />
                        <path d="M2.6 5.6H11.8M2.6 8.2H11.8M2.6 10.8H8" stroke="#26344d" />
                        <circle cx="13.4" cy="15" r="6.4" fill="#38424f" stroke="#79828f" strokeWidth="0.7" />
                        <text x="13.4" y="18.3" textAnchor="middle" fontSize="9.5" fill="#fff" letterSpacing="0">3</text>
                    </Svg>
                </Notices>
                <ShowDesktop />
            </Tray>
        </Taskbar>
    </Window>;

export default App;
